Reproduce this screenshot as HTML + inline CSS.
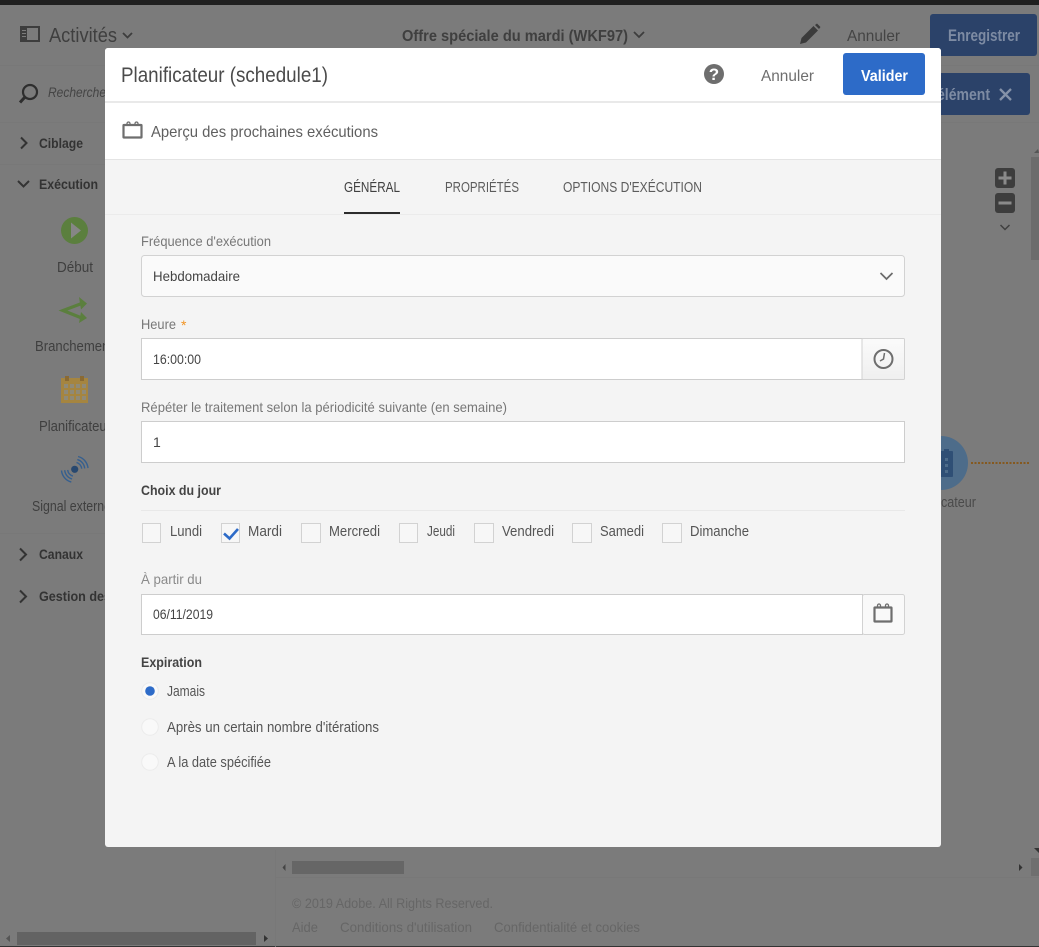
<!DOCTYPE html>
<html lang="fr"><head><meta charset="utf-8"><title>Planificateur</title>
<style>
html,body{margin:0;padding:0;width:1039px;height:947px;overflow:hidden;background:#7b7b7b}
svg{display:block;font-family:"Liberation Sans",sans-serif}
text{white-space:pre}
.l{font-size:14px;fill:#777}
.v{font-size:14px;fill:#444}
.c{font-size:14.5px;fill:#555}
.b{font-size:14px;font-weight:bold;fill:#444}
.s{font-size:14.5px;fill:#3f3f3f}
.sb{font-size:14px;font-weight:bold;fill:#333}
.f{font-size:14px;fill:#666}
.t{font-size:14.5px;fill:#5c5c5c}
.box{fill:#f7f7f7;stroke:#d2d2d2;stroke-width:1}
.inp{fill:#fff;stroke:#cdcdcd;stroke-width:1}
</style></head><body>
<svg width="1039" height="947" viewBox="0 0 1039 947" xmlns="http://www.w3.org/2000/svg">
<defs>
<linearGradient id="g" x1="0" y1="0" x2="0" y2="1"><stop offset="0" stop-color="#fbfbfb"/><stop offset="1" stop-color="#efefef"/></linearGradient>
</defs>
<!-- backdrop -->
<rect width="1039" height="947" fill="#7b7b7b"/>
<rect width="1039" height="5" fill="#202020"/>
<rect y="946" width="1039" height="1" fill="#333"/>
<rect y="65" width="1039" height="1" fill="#787878"/>
<rect x="275" y="122" width="764" height="1" fill="#787878"/>
<rect x="275" y="850" width="1" height="97" fill="#787878"/>
<rect x="275" y="877" width="764" height="1" fill="#787878"/>

<!-- top bar -->
<path d="M21 27h18v14h-18z" fill="none" stroke="#3d3d3d" stroke-width="2"/>
<rect x="21" y="27" width="6" height="14" fill="#3d3d3d"/>
<path d="M22 30.500h4M22 33.500h4M22 36.500h4" stroke="#7b7b7b" stroke-width="1"/>
<text x="49" y="42" font-size="20" fill="#3f3f3f" textLength="68" lengthAdjust="spacingAndGlyphs">Activités</text>
<path d="M123 33l4.500 4.500 4.500-4.500" fill="none" stroke="#3d3d3d" stroke-width="1.800"/>
<text x="402" y="41" font-size="15.500" font-weight="bold" fill="#3f3f3f" textLength="226" lengthAdjust="spacingAndGlyphs">Offre spéciale du mardi (WKF97)</text>
<path d="M634 32l5 5 5-5" fill="none" stroke="#3d3d3d" stroke-width="1.800"/>
<path d="M800 44l1.500-6 12-12 4.500 4.500-12 12z M815 25l2-1.500 3.500 3.500-1.500 2z" fill="#3b3b3b"/>
<text x="847" y="41" font-size="16" fill="#444" textLength="53" lengthAdjust="spacingAndGlyphs">Annuler</text>
<rect x="930" y="14" width="107" height="42" rx="3" fill="#2b4269"/>
<text x="948" y="41" font-size="16.500" fill="#7d8ba3" font-weight="bold" textLength="72" lengthAdjust="spacingAndGlyphs">Enregistrer</text>

<!-- right button -->
<rect x="900" y="73" width="130" height="42" rx="3" fill="#2b4269"/>
<text x="937" y="100" font-size="16.500" font-weight="bold" fill="#7d8ba3" textLength="53" lengthAdjust="spacingAndGlyphs">élément</text>
<path d="M1000 89l11 11M1011 89l-11 11" stroke="#8592a8" stroke-width="2.300"/>

<!-- left panel -->
<circle cx="30" cy="92" r="7" fill="none" stroke="#2e2e2e" stroke-width="2.200"/>
<path d="M25 97l-5 5.500" stroke="#2e2e2e" stroke-width="3"/>
<text x="48" y="97" font-size="13.500" font-style="italic" fill="#454545" textLength="62" lengthAdjust="spacingAndGlyphs">Rechercher</text>
<rect y="122" width="275" height="1" fill="#787878"/>
<rect y="164" width="275" height="1" fill="#787878"/>
<path d="M21 137.500l5.500 5.500-5.500 5.500" fill="none" stroke="#333" stroke-width="2"/>
<text x="39" y="148" class="sb" textLength="44" lengthAdjust="spacingAndGlyphs">Ciblage</text>
<path d="M18 181l5.500 5.500 5.500-5.500" fill="none" stroke="#333" stroke-width="2"/>
<text x="39" y="189" class="sb" textLength="59" lengthAdjust="spacingAndGlyphs">Exécution</text>

<circle cx="74.500" cy="230.500" r="13.500" fill="#5b7f3e"/>
<path d="M71 222.500l10 8-10 8z" fill="#868686"/>
<text x="57" y="272" class="s" textLength="36" lengthAdjust="spacingAndGlyphs">Début</text>

<path d="M83 303l-20 7.500 20 8" fill="none" stroke="#5b7f3e" stroke-width="3.200"/>
<path d="M79 297l8 6.500-6 6z M81 312l6 6-8 5z" fill="#5b7f3e"/>
<text x="35" y="351" class="s" textLength="78" lengthAdjust="spacingAndGlyphs">Branchement</text>

<rect x="61" y="378" width="27" height="25" fill="#a58540"/>
<rect x="65" y="376" width="4" height="5" fill="#8a6a33"/><rect x="80" y="376" width="4" height="5" fill="#8a6a33"/>
<g fill="#8f8a78"><rect x="64" y="384" width="4" height="4"/><rect x="70" y="384" width="4" height="4"/><rect x="76" y="384" width="4" height="4"/><rect x="82" y="384" width="4" height="4"/><rect x="64" y="390" width="4" height="4"/><rect x="70" y="390" width="4" height="4"/><rect x="76" y="390" width="4" height="4"/><rect x="82" y="390" width="4" height="4"/><rect x="64" y="396" width="4" height="4"/><rect x="70" y="396" width="4" height="4"/><rect x="76" y="396" width="4" height="4"/><rect x="82" y="396" width="4" height="4"/></g>
<text x="39" y="431" class="s" textLength="72" lengthAdjust="spacingAndGlyphs">Planificateur</text>

<circle cx="74.700" cy="469.300" r="3.600" fill="#28486f"/>
<g fill="none" stroke="#355f8f" stroke-width="1.400">
<path d="M78.100 456.500A13.300 13.300 0 0 1 88 468.100M71.300 482.100A13.300 13.300 0 0 1 61.500 470.500"/>
<path d="M77.300 459.600A10 10 0 0 1 84.700 468.400M72.100 479A10 10 0 0 1 64.700 470.200"/>
<path d="M76.500 462.500A7 7 0 0 1 81.700 468.700M72.900 476.100A7 7 0 0 1 67.700 469.900"/>
</g>
<text x="32" y="511" class="s" textLength="79" lengthAdjust="spacingAndGlyphs">Signal externe</text>

<rect y="533" width="275" height="1" fill="#787878"/>
<path d="M20 548.500l6 6-6 6" fill="none" stroke="#333" stroke-width="2"/>
<text x="39" y="559" class="sb" textLength="44" lengthAdjust="spacingAndGlyphs">Canaux</text>
<path d="M20 590.500l6 6-6 6" fill="none" stroke="#333" stroke-width="2"/>
<text x="39" y="601" class="sb" textLength="72" lengthAdjust="spacingAndGlyphs">Gestion des</text>

<!-- canvas -->
<circle cx="941" cy="463" r="27" fill="#4d6c8a"/>
<rect x="930" y="451" width="23" height="26" rx="1" fill="#2f4f75"/>
<rect x="944" y="449" width="5" height="6" fill="#2f4f75"/>
<g fill="#4d6c8a"><rect x="945" y="458" width="3" height="3"/><rect x="945" y="464" width="3" height="3"/><rect x="945" y="470" width="3" height="3"/></g>
<text x="941" y="507" font-size="14.500" fill="#4a4a4a" textLength="35" lengthAdjust="spacingAndGlyphs">cateur</text>
<line x1="971" y1="463" x2="1029" y2="463" stroke="#85591f" stroke-width="2" stroke-dasharray="2 1.500"/>

<rect x="995" y="168" width="20" height="20" rx="3" fill="#3d3d3d"/>
<path d="M998.500 178h13M1005 171.500v13" stroke="#8a8a8a" stroke-width="3"/>
<rect x="995" y="193" width="20" height="20" rx="3" fill="#3d3d3d"/>
<path d="M998.500 203h13" stroke="#8a8a8a" stroke-width="3"/>
<path d="M1000.500 225l4.500 4.500 4.500-4.500" fill="none" stroke="#404040" stroke-width="1.500"/>

<!-- scrollbars -->
<rect x="1031" y="157" width="8" height="103" fill="#6c6c6c"/>
<path d="M1034 153l4-4 1 4z" fill="#555"/>
<path d="M1034 848h5v5z" fill="#333"/>
<rect x="1031" y="858" width="8" height="18" fill="#6f6f6f"/>
<rect x="292" y="861" width="112" height="13" fill="#666"/>
<path d="M285.500 864v7l-3-3.500z" fill="#444"/>
<path d="M1019 864v7l3.500-3.500z" fill="#333"/>
<rect x="17" y="932" width="239" height="13" fill="#636363"/>
<path d="M10 935v7l-4-3.500z" fill="#555"/>
<path d="M264 935v7l4-3.500z" fill="#333"/>

<!-- footer -->
<text x="292" y="908" class="f" textLength="201" lengthAdjust="spacingAndGlyphs">© 2019 Adobe. All Rights Reserved.</text>
<text x="292" y="932" class="f" textLength="26" lengthAdjust="spacingAndGlyphs">Aide</text>
<text x="340" y="932" class="f" textLength="132" lengthAdjust="spacingAndGlyphs">Conditions d'utilisation</text>
<text x="494" y="932" class="f" textLength="146" lengthAdjust="spacingAndGlyphs">Confidentialité et cookies</text>

<!-- modal -->
<rect x="105" y="48" width="836" height="799" rx="3" fill="#f4f4f4"/>
<path d="M105 103V51a3 3 0 0 1 3-3h830a3 3 0 0 1 3 3v52z" fill="#fff"/>
<rect x="105" y="103" width="836" height="56" fill="#fff"/>
<rect x="105" y="101" width="836" height="2" fill="#e9e9e9"/>
<rect x="105" y="159" width="836" height="1" fill="#e4e4e4"/>
<rect x="105" y="214" width="836" height="1" fill="#ebebeb"/>

<text x="121" y="82" font-size="21" fill="#4b4b4b" textLength="207" lengthAdjust="spacingAndGlyphs">Planificateur (schedule1)</text>
<circle cx="714" cy="74" r="10" fill="#6e6e6e"/>
<text x="714" y="80" font-size="17" font-weight="bold" fill="#fff" text-anchor="middle">?</text>
<text x="761" y="81" font-size="16" fill="#6e6e6e" textLength="53" lengthAdjust="spacingAndGlyphs">Annuler</text>
<rect x="843" y="53" width="82" height="42" rx="3" fill="#2d6bc8"/>
<text x="861" y="81" font-size="15.500" font-weight="bold" fill="#fff" textLength="47" lengthAdjust="spacingAndGlyphs">Valider</text>

<path d="M124 125h17a.5.5 0 0 1 .5.500v11.500a.5.5 0 0 1-.5.500h-17a.5.5 0 0 1-.5-.500v-11.500a.5.5 0 0 1 .5-.500z" fill="none" stroke="#6e6e6e" stroke-width="2.200"/>
<path d="M127 125v-1.500a1.500 1.500 0 0 1 3 0v1.500M135 125v-1.500a1.500 1.500 0 0 1 3 0v1.500" fill="none" stroke="#6e6e6e" stroke-width="1.300"/>
<text x="151" y="137" font-size="16" fill="#5f5f5f" textLength="227" lengthAdjust="spacingAndGlyphs">Aperçu des prochaines exécutions</text>

<text x="344" y="192" class="t" style="fill:#404040" textLength="56" lengthAdjust="spacingAndGlyphs">GÉNÉRAL</text>
<rect x="344" y="212" width="56" height="2" fill="#2c2c2c"/>
<text x="445" y="192" class="t" textLength="74" lengthAdjust="spacingAndGlyphs">PROPRIÉTÉS</text>
<text x="563" y="192" class="t" textLength="139" lengthAdjust="spacingAndGlyphs">OPTIONS D'EXÉCUTION</text>

<!-- Frequency -->
<text x="141" y="246" class="l" textLength="130" lengthAdjust="spacingAndGlyphs">Fréquence d'exécution</text>
<rect x="141.500" y="255.500" width="763" height="41" rx="3" fill="#fafafa" stroke="#d2d2d2"/>
<text x="153" y="281" class="v" textLength="87" lengthAdjust="spacingAndGlyphs">Hebdomadaire</text>
<path d="M880.500 273l6 6 6-6" fill="none" stroke="#6a6a6a" stroke-width="1.700"/>

<!-- Time -->
<text x="141" y="329" class="l" textLength="35" lengthAdjust="spacingAndGlyphs">Heure</text>
<text x="181" y="330" font-size="14" fill="#f29423">*</text>
<rect x="141.500" y="338.500" width="721" height="41" class="inp"/>
<rect x="862" y="338.500" width="42.500" height="41" rx="1" fill="url(#g)" stroke="#d2d2d2"/>
<circle cx="883.500" cy="359" r="9" fill="none" stroke="#6e6e6e" stroke-width="2"/>
<path d="M884.500 353l-1 6-3.500 2" fill="none" stroke="#6e6e6e" stroke-width="1.500"/>
<text x="153" y="364" class="v" textLength="48" lengthAdjust="spacingAndGlyphs">16:00:00</text>

<!-- Repeat -->
<text x="141" y="412" class="l" textLength="366" lengthAdjust="spacingAndGlyphs">Répéter le traitement selon la périodicité suivante (en semaine)</text>
<rect x="141.500" y="421.500" width="763" height="41" class="inp"/>
<text x="153" y="447" class="v">1</text>

<!-- Days -->
<text x="141" y="495" class="b" textLength="80" lengthAdjust="spacingAndGlyphs">Choix du jour</text>
<rect x="141" y="510" width="764" height="1" fill="#e8e8e8"/>
<rect x="142.500" y="523.500" width="18" height="19" class="box"/>
<text x="170" y="536" class="c" textLength="32" lengthAdjust="spacingAndGlyphs">Lundi</text>
<rect x="221.500" y="523.500" width="18" height="19" class="box"/>
<path d="M224 533.500l5.500 5 8.500-9.500" fill="none" stroke="#2d6bc8" stroke-width="2.600"/>
<text x="248" y="536" class="c" textLength="34" lengthAdjust="spacingAndGlyphs">Mardi</text>
<rect x="301.500" y="523.500" width="19" height="19" class="box"/>
<text x="329" y="536" class="c" textLength="51" lengthAdjust="spacingAndGlyphs">Mercredi</text>
<rect x="399.500" y="523.500" width="18" height="19" class="box"/>
<text x="427" y="536" class="c" textLength="28" lengthAdjust="spacingAndGlyphs">Jeudi</text>
<rect x="474.500" y="523.500" width="19" height="19" class="box"/>
<text x="502" y="536" class="c" textLength="52" lengthAdjust="spacingAndGlyphs">Vendredi</text>
<rect x="572.500" y="523.500" width="19" height="19" class="box"/>
<text x="600" y="536" class="c" textLength="44" lengthAdjust="spacingAndGlyphs">Samedi</text>
<rect x="662.500" y="523.500" width="19" height="19" class="box"/>
<text x="690" y="536" class="c" textLength="59" lengthAdjust="spacingAndGlyphs">Dimanche</text>

<!-- Date -->
<text x="141" y="584" class="l" style="fill:#8a8a8a" textLength="61" lengthAdjust="spacingAndGlyphs">À partir du</text>
<rect x="141.500" y="594.500" width="721" height="40" class="inp"/>
<rect x="862.500" y="594.500" width="42" height="40" rx="2" fill="#f9f9f9" stroke="#d2d2d2"/>
<path d="M875 607.500h16a.5.5 0 0 1 .5.500v13a.5.5 0 0 1-.5.500h-16a.5.5 0 0 1-.5-.500v-13a.5.5 0 0 1 .5-.500z" fill="none" stroke="#6e6e6e" stroke-width="2.200"/>
<path d="M877.500 607v-1.500a1.500 1.500 0 0 1 3 0v1.500M885.500 607v-1.500a1.500 1.500 0 0 1 3 0v1.500" fill="none" stroke="#6e6e6e" stroke-width="1.300"/>
<text x="153" y="619" class="v" textLength="60" lengthAdjust="spacingAndGlyphs">06/11/2019</text>

<!-- Expiration -->
<text x="141" y="667" class="b" textLength="61" lengthAdjust="spacingAndGlyphs">Expiration</text>
<circle cx="150" cy="691" r="8.300" fill="#f9f9f9" stroke="#ececec"/>
<circle cx="150" cy="691" r="4.800" fill="#2d6bc8"/>
<text x="167" y="696" class="c" textLength="38" lengthAdjust="spacingAndGlyphs">Jamais</text>
<circle cx="150" cy="727" r="8.300" fill="#f9f9f9" stroke="#ececec"/>
<text x="167" y="732" class="c" textLength="212" lengthAdjust="spacingAndGlyphs">Après un certain nombre d'itérations</text>
<circle cx="150" cy="762" r="8.300" fill="#f9f9f9" stroke="#ececec"/>
<text x="167" y="767" class="c" textLength="104" lengthAdjust="spacingAndGlyphs">A la date spécifiée</text>
</svg>
</body></html>
